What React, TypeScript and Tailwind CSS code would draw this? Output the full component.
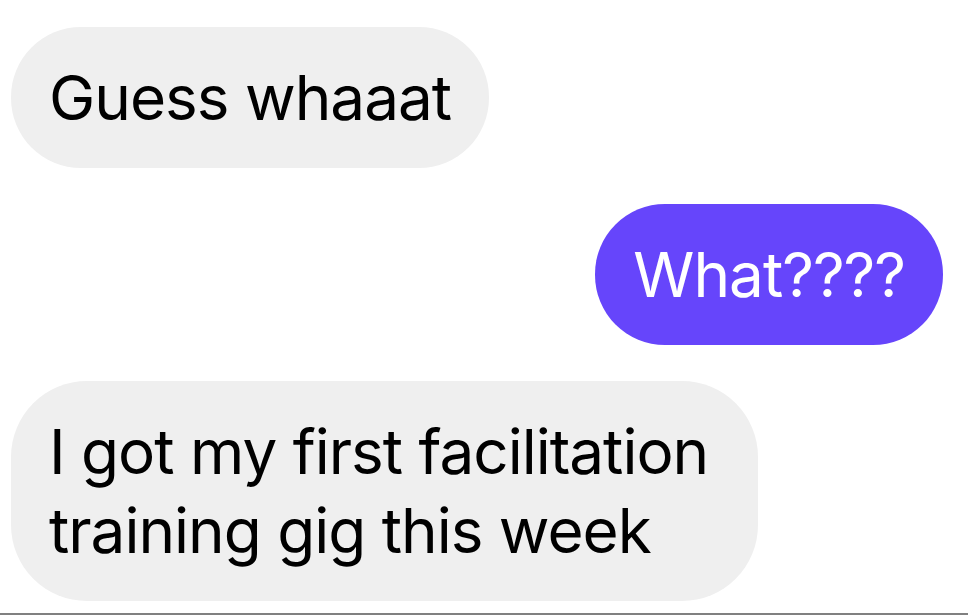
const messages = [
  { id: 1, lines: ['Guess whaaat'], mine: false },
  { id: 2, lines: ['What????'], mine: true },
  { id: 3, lines: ['I got my first facilitation', 'training gig this week'], mine: false },
]

function Bubble({ lines, mine }: { lines: string[]; mine: boolean }) {
  const wide = lines.length > 1
  return (
    <div className={`flex ${mine ? 'justify-end' : 'justify-start'}`}>
      <div
        className={`rounded-[70px] px-[38px] py-[31px] text-[62px] leading-[79px] tracking-[-1px] whitespace-nowrap ${
          wide ? 'w-[747px] rounded-[76px]' : ''
        } ${mine ? 'bg-[#6645fb] text-white' : 'bg-[#efefef] text-black'}`}
      >
        {lines.map((line) => (
          <div key={line}>{line}</div>
        ))}
      </div>
    </div>
  )
}

export default function App() {
  return (
    <div
      className="flex h-[615px] w-[968px] flex-col overflow-hidden bg-white"
      style={{ fontFamily: 'Inter, "Noto Sans", sans-serif' }}
    >
      <div className="flex flex-1 flex-col gap-[36px] pl-[11px] pr-[25px] pt-[27px]">
        {messages.map((m) => (
          <Bubble key={m.id} lines={m.lines} mine={m.mine} />
        ))}
      </div>
      <div className="h-[2px] w-full bg-[#808080]" />
    </div>
  )
}
